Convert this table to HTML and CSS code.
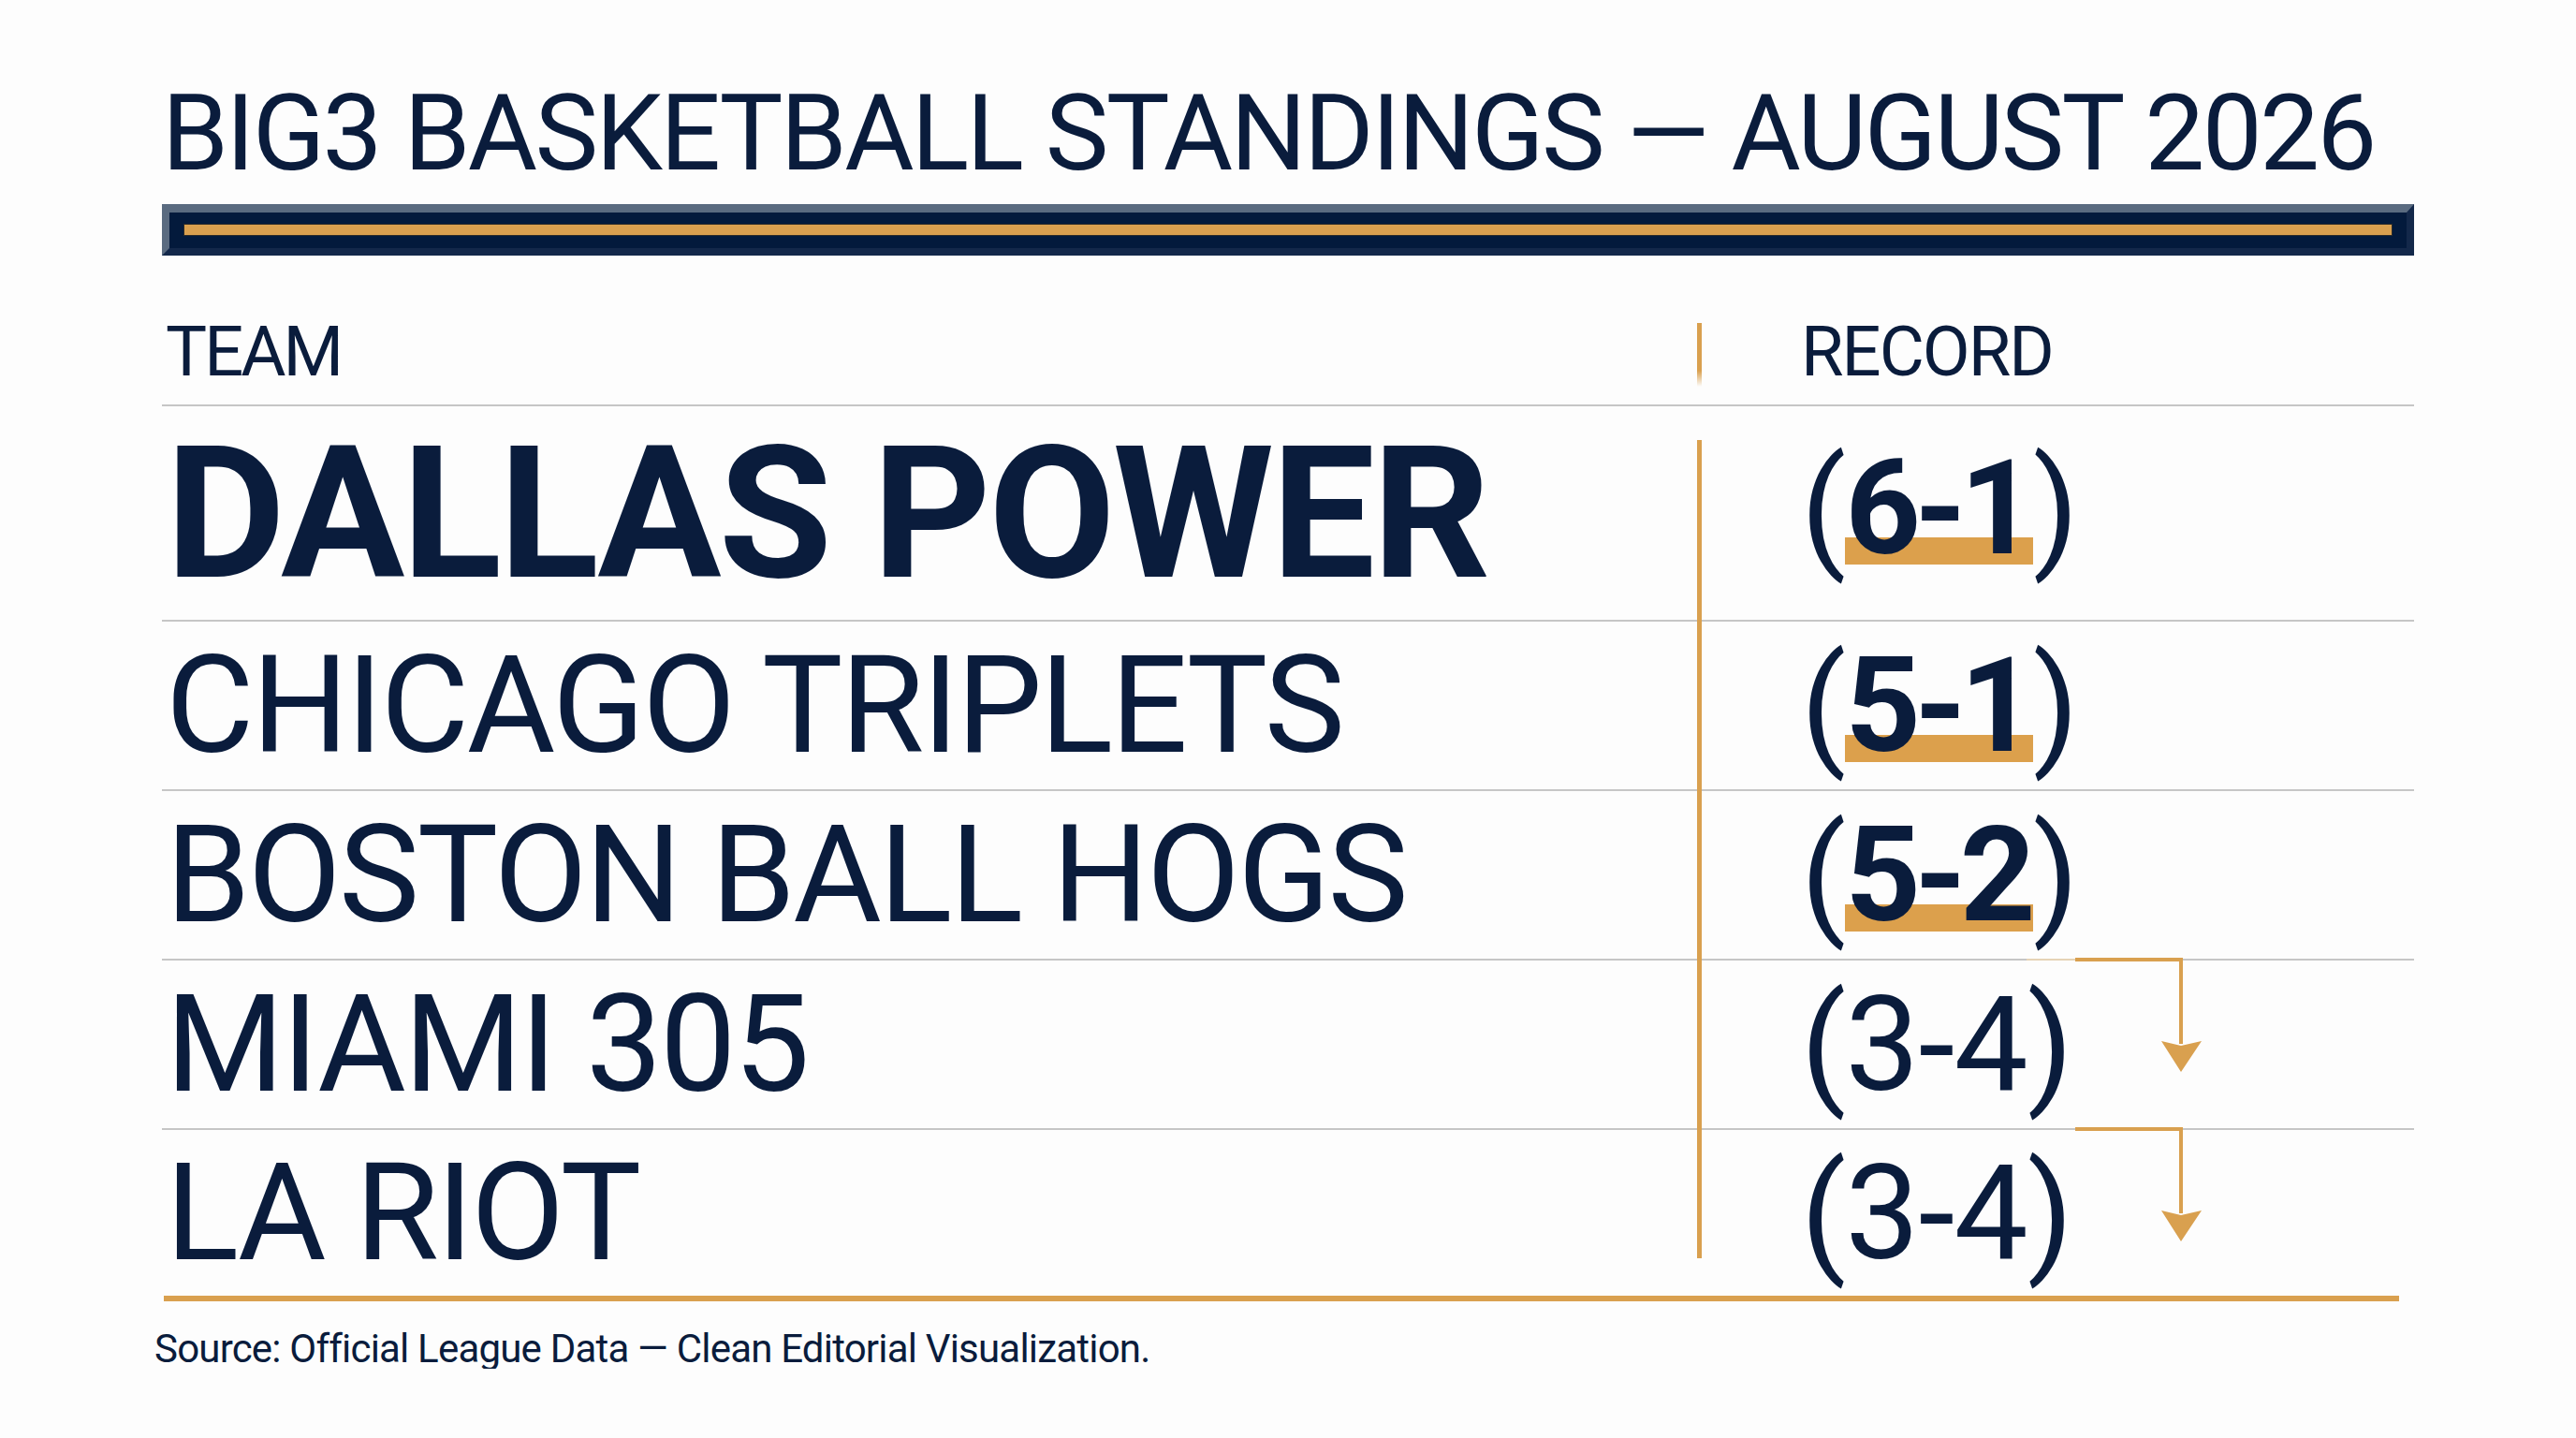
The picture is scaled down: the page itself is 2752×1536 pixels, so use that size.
FILE: index.html
```html
<!DOCTYPE html>
<html lang="en">
<head>
<meta charset="UTF-8">
<meta name="viewport" content="width=device-width, initial-scale=1.0">
<title>BIG3 Standings</title>
<link rel="stylesheet" href="styles.css">
</head>
<body>
<div class="page">
  <h1 class="title">BIG3 BASKETBALL STANDINGS — AUGUST 2026</h1>
  <div class="title-bar"><div class="gold-line"></div></div>

  <div class="standings">
    <div class="row head">
      <div class="team">TEAM</div>
      <div class="head-rule"></div>
      <div class="record">RECORD</div>
    </div>

    <div class="rows">
      <div class="divider"></div>

      <div class="row leader">
        <div class="team">DALLAS POWER</div>
        <div></div>
        <div class="record">(<span class="mark">6-1</span>)</div>
      </div>
      <div class="row">
        <div class="team">CHICAGO TRIPLETS</div>
        <div></div>
        <div class="record">(<span class="mark">5-1</span>)</div>
      </div>
      <div class="row">
        <div class="team">BOSTON BALL HOGS</div>
        <div></div>
        <div class="record">(<span class="mark">5-2</span>)</div>
      </div>
      <div class="row">
        <div class="team">MIAMI 305</div>
        <div></div>
        <div class="record">(3-4)</div>
        <svg class="drop" width="190" height="124" viewBox="0 0 190 124">
          <line x1="0" y1="2" x2="52" y2="2" stroke="#e6d3b6" stroke-width="2"/>
          <polyline points="52,2 165,2 165,92" fill="none" stroke="#d9a04f" stroke-width="4"/>
          <polygon points="144,89 165,94 187,89 165,122" fill="#d9a04f"/>
        </svg>
      </div>
      <div class="row last">
        <div class="team">LA RIOT</div>
        <div></div>
        <div class="record">(3-4)</div>
        <svg class="drop" width="190" height="124" viewBox="0 0 190 124">
          <polyline points="52,2 165,2 165,92" fill="none" stroke="#d9a04f" stroke-width="4"/>
          <polygon points="144,89 165,94 187,89 165,122" fill="#d9a04f"/>
        </svg>
      </div>
    </div>
  </div>

  <div class="bottom-rule"></div>
  <p class="source">Source: Official League Data — Clean Editorial Visualization.</p>
</div>
</body>
</html>
```

FILE: styles.css
```css
body {
  margin: 0;
  background: #fdfdfd;
  font-family: Roboto, "Liberation Sans", Arial, sans-serif;
  color: #0a1c3c;
}

.page {
  width: 2406px;
  padding: 85px 0 0 173px;
}

.title {
  margin: 0;
  font-size: 114px;
  font-weight: 400;
  line-height: 114px;
  letter-spacing: -2.7px;
  white-space: nowrap;
}

/* dark bevelled bar under the title */
.title-bar {
  margin-top: 19px;
  height: 25px;
  background: #031a3c;
  border-top: 9px solid #5a6b80;
  border-left: 8px solid #5a6b80;
  border-right: 8px solid #13284a;
  border-bottom: 8px solid #13284a;
  padding: 13px 16px 0;
}

.gold-line {
  height: 11px;
  background: #d9a04f;
  box-shadow: 0 0 0 1px #2a2a2a;
}

.row {
  display: grid;
  grid-template-columns: 1640px 5px 1fr;
  align-items: center;
  height: 179px;
  border-bottom: 2px solid #c6c6c6;
  position: relative;
}

.row.head {
  align-items: start;
  height: auto;
  padding: 66px 0 19px;
}

.row.leader {
  height: 228px;
}

.row.last {
  height: 177px;
  border-bottom: none;
}

.team {
  padding-left: 4px;
  font-size: 145px;
  line-height: 145px;
  letter-spacing: -2.5px;
  white-space: nowrap;
}

.head .team,
.head .record {
  font-size: 74px;
  line-height: 74px;
  letter-spacing: -2px;
}

.head .team {
  letter-spacing: -3px;
}

.leader .team {
  font-size: 197px;
  line-height: 197px;
  font-weight: 700;
  letter-spacing: -3px;
}

.head-rule {
  margin-top: 6px;
  height: 68px;
  background: linear-gradient(#d9a04f 75%, rgba(217, 160, 79, 0));
}

.record {
  padding-left: 106px;
  font-size: 141px;
  line-height: 141px;
  letter-spacing: -1px;
  white-space: nowrap;
}

.leader .record {
  padding-bottom: 12px;
}

.mark {
  font-weight: 700;
  letter-spacing: -7px;
  background: linear-gradient(#dca04c, #dca04c) no-repeat;
  background-size: 100% 29px;
  background-position: 0 calc(100% - 22px);
  padding-right: 4px;
}

.rows {
  position: relative;
}

.divider {
  position: absolute;
  left: 1640px;
  top: 36px;
  bottom: 40px;
  width: 5px;
  background: #d9a04f;
  z-index: 1;
}

.drop {
  position: absolute;
  left: 1992px;
  top: -3px;
  z-index: 1;
}

.bottom-rule {
  width: 2388px;
  margin-left: 2px;
  height: 6px;
  background: #d9a04f;
}

.source {
  margin: 30px 0 0 -8px;
  font-size: 42px;
  line-height: 42px;
  letter-spacing: -0.8px;
}
```
